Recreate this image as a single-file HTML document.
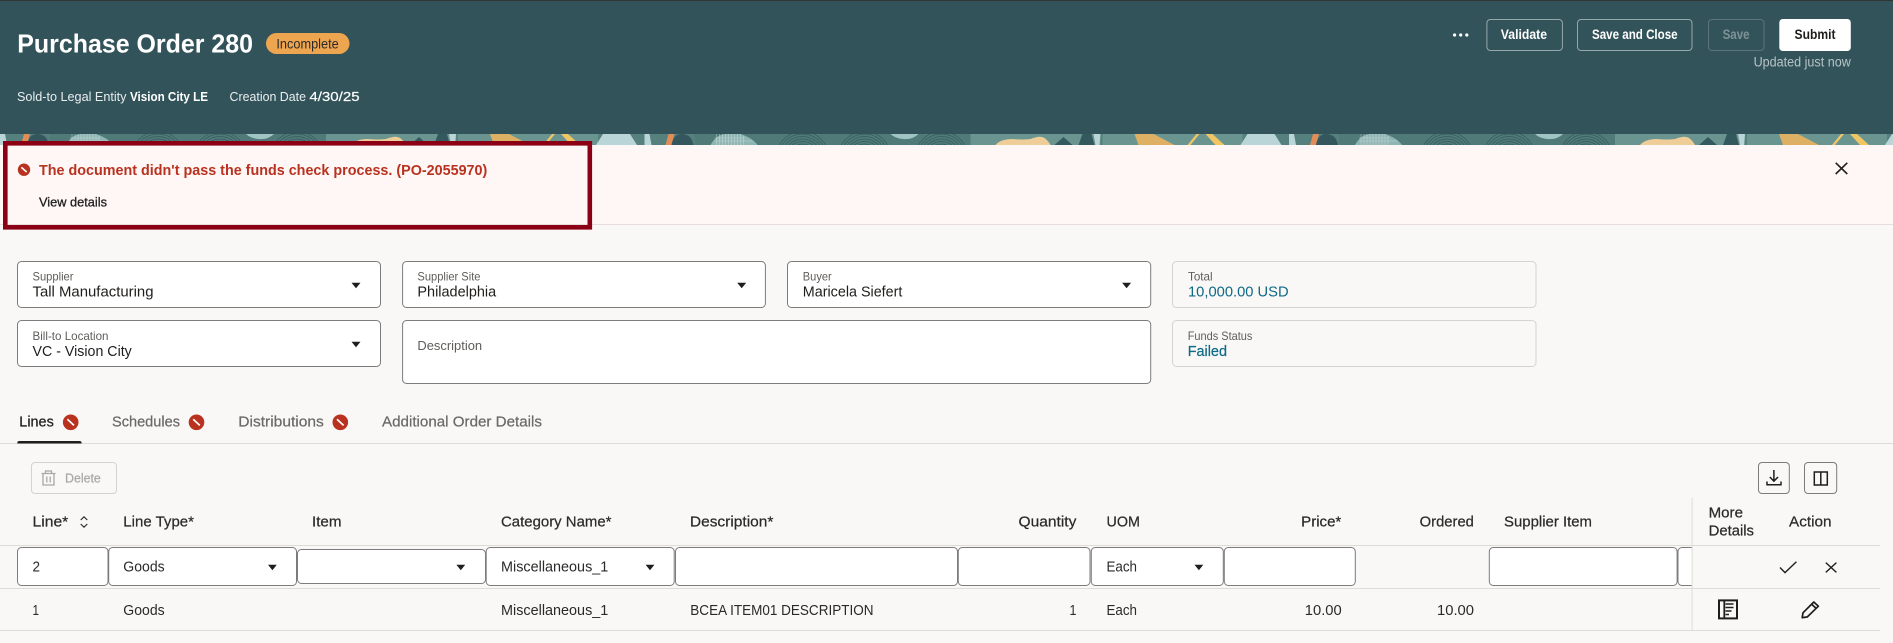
<!DOCTYPE html>
<html lang="en">
<head>
<meta charset="utf-8">
<title>Purchase Order 280</title>
<style>
html,body{margin:0;padding:0;background:#f9f8f6;width:1893px;height:643px;overflow:hidden}
svg{display:block;position:absolute;left:0;top:0}
text{font-family:"Liberation Sans",sans-serif;white-space:pre}
.m{stroke:currentColor;stroke-width:.22}
.lab{font-size:12px;fill:#5f5d5a;color:#5f5d5a}
.val{font-size:15px;fill:#1f1e1c}
.blue{font-size:15px;fill:#0f6a86;color:#0f6a86}
.hd{font-size:14.5px;fill:#2b2a28;color:#2b2a28}
.td{font-size:14.5px;fill:#2b2a28}
.tab{font-size:15px;fill:#6b6966;color:#6b6966}
.input{fill:#fff;stroke:#7d7c7a;stroke-width:1}
.btn{font-size:13.5px;font-weight:bold}
</style>
</head>
<body>
<svg width="1893" height="643" viewBox="0 0 1893 643" xmlns="http://www.w3.org/2000/svg">
<defs>
<pattern id="tile" x="0" y="134" width="644.5" height="11" patternUnits="userSpaceOnUse">
  <rect width="644.5" height="11" fill="#55807d"/>
  <rect x="50" width="280" height="11" fill="#4f7a78"/>
  <polygon points="-1,0 5,0 7,11 -1,11" fill="#b9d5d7"/>
  <polygon points="24,0 30,0 27,11 21,11" fill="#e28d55"/>
  <path d="M27 11 Q29 0 37 0 Q47 0 49 11Z" fill="#33575d"/>
  <path d="M66 11 Q72 0 82 0 L96 0 Q108 4 113 11Z" fill="#8fb5b3"/>
  <g stroke="#dce9e8" stroke-width=".6" fill="none" opacity=".6">
    <path d="M72 11V0M75 11V0M78 11V0M81 11V0M84 11V0M87 11V0M90 11V0M93 11V0M96 11V0M99 11V2"/>
    <path d="M70 4H100M70 7H108"/>
  </g>
  <g fill="none" stroke="#2f5458" stroke-width=".75" opacity=".85">
    <circle cx="158" cy="24" r="14"/><circle cx="158" cy="24" r="16.5"/><circle cx="158" cy="24" r="19"/><circle cx="158" cy="24" r="21.5"/><circle cx="158" cy="24" r="24"/><circle cx="158" cy="24" r="26.5"/>
    <circle cx="220" cy="24" r="14"/><circle cx="220" cy="24" r="16.5"/><circle cx="220" cy="24" r="19"/><circle cx="220" cy="24" r="21.5"/><circle cx="220" cy="24" r="24"/><circle cx="220" cy="24" r="26.5"/>
    <circle cx="297" cy="24" r="14"/><circle cx="297" cy="24" r="16.5"/><circle cx="297" cy="24" r="19"/><circle cx="297" cy="24" r="21.5"/><circle cx="297" cy="24" r="24"/><circle cx="297" cy="24" r="26.5"/>
  </g>
  <path d="M246 0H274Q268 6 258 5 250 4 246 0Z" fill="#a0c4c3"/>
  <rect x="326" width="130" height="11" fill="#6a9490"/>
  <path d="M351 11Q356 5 368 5 378 6 386 5 396 1 400 4 404 7 406 11Z" fill="#eecd98"/>
  <polygon points="410,11 419,3 428,11" fill="#33585e"/>
  <polygon points="434,11 438,0 447,0 450,11" fill="#33585e"/>
  <polygon points="449,0 456,0 455,11 451,11" fill="#b9d5d7"/>
  <rect x="458" width="140" height="11" fill="#6a9490"/>
  <polygon points="490,0 509,0 530,11 494,11" fill="#deb063"/>
  <polygon points="552,0 555,0 546,11 543,11" fill="#f0c664"/>
  <polygon points="561,0 568,0 580,11 571,11" fill="#f0c664"/>
  <polygon points="603,0 630,0 637,11 596,11" fill="#b9d5d7"/>
  <rect x="637" width="8" height="11" fill="#55807d"/>
</pattern>
</defs>

<!-- page -->
<rect width="1893" height="643" fill="#f9f8f6"/>

<!-- header -->
<rect width="1893" height="134" fill="#33535a"/>
<rect width="1893" height="1" fill="#333"/>
<rect y="134" width="1893" height="11" fill="url(#tile)"/>

<text x="17.3" y="52.7" textLength="235.7" lengthAdjust="spacingAndGlyphs" font-size="26" font-weight="bold" fill="#fff">Purchase Order 280</text>
<rect x="266" y="33" width="83.5" height="21" rx="10.5" fill="#eda550"/>
<text x="276.4" y="48.3" textLength="62.3" lengthAdjust="spacingAndGlyphs" font-size="14" fill="#2b2a28">Incomplete</text>

<text x="17" y="101" textLength="109.5" lengthAdjust="spacingAndGlyphs" font-size="13.2" fill="#e8eeee">Sold-to Legal Entity</text>
<text x="130" y="101" textLength="78" lengthAdjust="spacingAndGlyphs" font-size="13.2" font-weight="bold" fill="#fff">Vision City LE</text>
<text x="229.5" y="101" textLength="76.5" lengthAdjust="spacingAndGlyphs" font-size="13.2" fill="#e8eeee">Creation Date</text>
<text x="309.4" y="101" textLength="50.2" lengthAdjust="spacingAndGlyphs" font-size="13.2" fill="#fff" stroke="#fff" stroke-width=".2">4/30/25</text>

<!-- header actions -->
<g fill="#fff"><circle cx="1454.6" cy="35" r="1.6"/><circle cx="1460.7" cy="35" r="1.6"/><circle cx="1466.8" cy="35" r="1.6"/></g>
<rect x="1486.9" y="19.5" width="75.5" height="31" rx="3.5" fill="none" stroke="#95a8ab"/>
<text class="btn" x="1500.8" y="38.9" textLength="46.2" lengthAdjust="spacingAndGlyphs" fill="#fff">Validate</text>
<rect x="1577.5" y="19.5" width="114.5" height="31" rx="3.5" fill="none" stroke="#95a8ab"/>
<text class="btn" x="1592" y="38.9" textLength="85.6" lengthAdjust="spacingAndGlyphs" fill="#fff">Save and Close</text>
<rect x="1708.5" y="19.5" width="55.5" height="31" rx="3.5" fill="none" stroke="#5b7479"/>
<text class="btn" x="1722.6" y="38.9" textLength="27" lengthAdjust="spacingAndGlyphs" fill="#7d9397">Save</text>
<rect x="1779.3" y="19" width="71.5" height="32" rx="3.5" fill="#fff"/>
<text class="btn" x="1794.5" y="38.9" textLength="41" lengthAdjust="spacingAndGlyphs" fill="#1f1e1c">Submit</text>
<text x="1753.6" y="66.7" textLength="97.2" lengthAdjust="spacingAndGlyphs" font-size="13.5" fill="#b5c4c7">Updated just now</text>

<!-- message banner -->
<rect y="145" width="1893" height="79.5" fill="#fef7f5"/>
<rect y="224" width="1893" height="1" fill="#e8dcdc"/>
<circle cx="24" cy="169.7" r="6.2" fill="#b8321f"/>
<path d="M21.4 167.4L26.6 172" stroke="#fff" stroke-width="1.6" fill="none"/>
<text x="39" y="175" textLength="448.3" lengthAdjust="spacingAndGlyphs" font-size="15" font-weight="bold" fill="#b8321f">The document didn't pass the funds check process. (PO-2055970)</text>
<text x="39" y="206.7" textLength="68" lengthAdjust="spacingAndGlyphs" font-size="13" fill="#1f1e1c" stroke="#1f1e1c" stroke-width=".3">View details</text>
<path d="M1835.7 162.8L1847.3 174M1847.3 162.8L1835.7 174" stroke="#1f1e1c" stroke-width="1.6" fill="none"/>
<rect x="5.3" y="143.3" width="584.5" height="84" fill="none" stroke="#8b0015" stroke-width="4.6"/>

<!-- form row 1 -->
<rect class="input" x="17.5" y="261.5" width="363" height="46" rx="4"/>
<text class="lab" x="32.5" y="280.7" textLength="41" lengthAdjust="spacingAndGlyphs">Supplier</text>
<text class="val" x="32.5" y="296.7" textLength="121" lengthAdjust="spacingAndGlyphs">Tall Manufacturing</text>
<polygon points="351.5,282.7 360.5,282.7 356,288.2" fill="#1f1e1c"/>

<rect class="input" x="402.6" y="261.5" width="362.8" height="46" rx="4"/>
<text class="lab" x="417.4" y="280.7" textLength="63.1" lengthAdjust="spacingAndGlyphs">Supplier Site</text>
<text class="val" x="417.4" y="296.7" textLength="78.8" lengthAdjust="spacingAndGlyphs">Philadelphia</text>
<polygon points="737.2,282.7 746.2,282.7 741.7,288.2" fill="#1f1e1c"/>

<rect class="input" x="787.5" y="261.5" width="363.2" height="46" rx="4"/>
<text class="lab" x="802.8" y="280.7" textLength="28.9" lengthAdjust="spacingAndGlyphs">Buyer</text>
<text class="val" x="802.8" y="296.7" textLength="99.6" lengthAdjust="spacingAndGlyphs">Maricela Siefert</text>
<polygon points="1122.1,282.7 1131.1,282.7 1126.6,288.2" fill="#1f1e1c"/>

<rect x="1172.5" y="261.5" width="363.5" height="46" rx="4" fill="#f9f8f6" stroke="#d5d3d0"/>
<text class="lab" x="1188" y="280.7" textLength="24.6" lengthAdjust="spacingAndGlyphs">Total</text>
<text class="blue" x="1188" y="296.7" textLength="100.6" lengthAdjust="spacingAndGlyphs">10,000.00 USD</text>

<!-- form row 2 -->
<rect class="input" x="17.5" y="320.5" width="363" height="46" rx="4"/>
<text class="lab" x="32.5" y="340" textLength="76" lengthAdjust="spacingAndGlyphs">Bill-to Location</text>
<text class="val" x="32.5" y="356" textLength="99.3" lengthAdjust="spacingAndGlyphs">VC - Vision City</text>
<polygon points="351.5,341.7 360.5,341.7 356,347.2" fill="#1f1e1c"/>

<rect class="input" x="402.6" y="320.5" width="748.1" height="63" rx="4"/>
<text class="lab" x="417.4" y="350" textLength="64.7" lengthAdjust="spacingAndGlyphs" style="font-size:12.5px">Description</text>

<rect x="1172.5" y="320.5" width="363.5" height="46" rx="4" fill="#f9f8f6" stroke="#d5d3d0"/>
<text class="lab" x="1187.7" y="340" textLength="64.7" lengthAdjust="spacingAndGlyphs">Funds Status</text>
<text class="blue m" x="1187.7" y="356" textLength="39.3" lengthAdjust="spacingAndGlyphs">Failed</text>

<!-- tabs -->
<rect y="443" width="1893" height="1" fill="#dedcd9"/>
<text class="tab m" x="19.3" y="426.7" textLength="34.5" lengthAdjust="spacingAndGlyphs" style="fill:#1f1e1c;color:#1f1e1c">Lines</text>
<path d="M17.3 443.5V443a2 2 0 0 1 2-2H79.6a2 2 0 0 1 2 2v.5Z" fill="#1f1e1c"/>
<circle cx="70.7" cy="422.3" r="7.8" fill="#b8321f"/><path d="M67.4 419.2L74 425.4" stroke="#fff" stroke-width="1.7"/>
<text class="tab m" x="112" y="426.7" textLength="68" lengthAdjust="spacingAndGlyphs">Schedules</text>
<circle cx="196.5" cy="422.3" r="7.8" fill="#b8321f"/><path d="M193.2 419.2L199.8 425.4" stroke="#fff" stroke-width="1.7"/>
<text class="tab m" x="238.3" y="426.7" textLength="85.5" lengthAdjust="spacingAndGlyphs">Distributions</text>
<circle cx="340.3" cy="422.3" r="7.8" fill="#b8321f"/><path d="M337 419.2L343.6 425.4" stroke="#fff" stroke-width="1.7"/>
<text class="tab m" x="382" y="426.7" textLength="160" lengthAdjust="spacingAndGlyphs">Additional Order Details</text>

<!-- toolbar -->
<rect x="31.5" y="462.5" width="85" height="31" rx="3.5" fill="none" stroke="#d4d2cf"/>
<g fill="none" stroke="#a9a7a4" stroke-width="1.3">
  <path d="M41.5 473.5H55.5M45.5 473.5V471H51.5V473.5M43 473.5V485H54V473.5M46.8 476.5V482.5M50.2 476.5V482.5"/>
</g>
<text class="m" x="65" y="482.7" textLength="35.8" lengthAdjust="spacingAndGlyphs" font-size="13" fill="#a9a7a4" style="color:#a9a7a4">Delete</text>

<rect x="1758.5" y="462.5" width="30.8" height="31" rx="3.5" fill="none" stroke="#7d7c7a"/>
<path d="M1773.9 470V481M1769.8 477L1773.9 481.2 1778 477M1767 481.5V484.7H1781V481.5" fill="none" stroke="#1f1e1c" stroke-width="1.5"/>
<rect x="1804.5" y="462.5" width="32.2" height="31" rx="3.5" fill="none" stroke="#7d7c7a"/>
<path d="M1814.3 472H1827.3V485H1814.3ZM1820.8 472V485" fill="none" stroke="#1f1e1c" stroke-width="1.5"/>

<!-- table headers -->
<text class="hd m" x="32.5" y="526.7" textLength="35.8" lengthAdjust="spacingAndGlyphs">Line*</text>
<path d="M80.7 520L84 516.8 87.3 520M80.7 524L84 527.2 87.3 524" fill="none" stroke="#2b2a28" stroke-width="1.1"/>
<text class="hd m" x="123.3" y="526.7" textLength="70.7" lengthAdjust="spacingAndGlyphs">Line Type*</text>
<text class="hd m" x="312" y="526.7" textLength="29.5" lengthAdjust="spacingAndGlyphs">Item</text>
<text class="hd m" x="501" y="526.7" textLength="110.5" lengthAdjust="spacingAndGlyphs">Category Name*</text>
<text class="hd m" x="689.9" y="526.7" textLength="83.5" lengthAdjust="spacingAndGlyphs">Description*</text>
<text class="hd m" x="1018.5" y="526.7" textLength="57.9" lengthAdjust="spacingAndGlyphs">Quantity</text>
<text class="hd m" x="1106.5" y="526.7" textLength="33.4" lengthAdjust="spacingAndGlyphs">UOM</text>
<text class="hd m" x="1301.2" y="526.7" textLength="40.1" lengthAdjust="spacingAndGlyphs">Price*</text>
<text class="hd m" x="1419.7" y="526.7" textLength="54.2" lengthAdjust="spacingAndGlyphs">Ordered</text>
<text class="hd m" x="1504" y="526.7" textLength="88" lengthAdjust="spacingAndGlyphs">Supplier Item</text>
<text class="hd m" x="1708.6" y="517.7" textLength="34.4" lengthAdjust="spacingAndGlyphs">More</text>
<text class="hd m" x="1708.6" y="535.7" textLength="45.4" lengthAdjust="spacingAndGlyphs">Details</text>
<text class="hd m" x="1789" y="526.7" textLength="42.5" lengthAdjust="spacingAndGlyphs">Action</text>

<!-- table lines -->
<rect y="545" width="1880" height="1" fill="#dedcd9"/>
<rect y="588" width="1880" height="1" fill="#dedcd9"/>
<rect y="630" width="1880" height="1" fill="#dedcd9"/>

<!-- edit row -->
<rect class="input" x="17.5" y="547.5" width="90.5" height="38" rx="4"/>
<text class="td" x="32.5" y="571.7" textLength="7.5" lengthAdjust="spacingAndGlyphs">2</text>
<rect class="input" x="108.7" y="547.5" width="187.8" height="38" rx="4"/>
<text class="td" x="123.3" y="571.7" textLength="41.4" lengthAdjust="spacingAndGlyphs">Goods</text>
<polygon points="268,564.8 276.8,564.8 272.4,570.2" fill="#1f1e1c"/>
<rect class="input" x="297.5" y="549.5" width="188" height="34" rx="4"/>
<polygon points="456.4,564.8 465.2,564.8 460.8,570.2" fill="#1f1e1c"/>
<rect class="input" x="486.2" y="547.5" width="188" height="38" rx="4"/>
<text class="td" x="501" y="571.7" textLength="107.3" lengthAdjust="spacingAndGlyphs">Miscellaneous_1</text>
<polygon points="645.6,564.8 654.4,564.8 650,570.2" fill="#1f1e1c"/>
<rect class="input" x="675.5" y="547.5" width="282" height="38" rx="4"/>
<rect class="input" x="958.3" y="547.5" width="131.7" height="38" rx="4"/>
<rect class="input" x="1091.3" y="547.5" width="132" height="38" rx="4"/>
<text class="td" x="1106.5" y="571.7" textLength="30.5" lengthAdjust="spacingAndGlyphs">Each</text>
<polygon points="1194.5,564.8 1203.3,564.8 1198.9,570.2" fill="#1f1e1c"/>
<rect class="input" x="1224.3" y="547.5" width="131" height="38" rx="4"/>
<rect class="input" x="1489.3" y="547.5" width="187.8" height="38" rx="4"/>
<path d="M1692 547.5H1682a4 4 0 0 0-4 4V581.5a4 4 0 0 0 4 4H1692V547.5Z" fill="#fff"/>
<path d="M1692 547.5H1682a4 4 0 0 0-4 4V581.5a4 4 0 0 0 4 4H1692" fill="none" stroke="#7d7c7a"/>

<!-- data row -->
<text class="td" x="32.5" y="615" textLength="6.5" lengthAdjust="spacingAndGlyphs">1</text>
<text class="td" x="123.3" y="615" textLength="41.4" lengthAdjust="spacingAndGlyphs">Goods</text>
<text class="td" x="501" y="615" textLength="107.3" lengthAdjust="spacingAndGlyphs">Miscellaneous_1</text>
<text class="td" x="690.3" y="615" textLength="183.2" lengthAdjust="spacingAndGlyphs">BCEA ITEM01 DESCRIPTION</text>
<text class="td" x="1069.5" y="615" textLength="6.9" lengthAdjust="spacingAndGlyphs">1</text>
<text class="td" x="1106.5" y="615" textLength="30.5" lengthAdjust="spacingAndGlyphs">Each</text>
<text class="td" x="1304.8" y="615" textLength="36.9" lengthAdjust="spacingAndGlyphs">10.00</text>
<text class="td" x="1437" y="615" textLength="37" lengthAdjust="spacingAndGlyphs">10.00</text>

<!-- sticky column -->
<rect x="1691.6" y="497.7" width="1" height="133" fill="#dedcd9"/>
<path d="M1780 567.5L1785 572.6 1796.4 561.8" fill="none" stroke="#1f1e1c" stroke-width="1.4"/>
<path d="M1825.8 562.6L1836.4 572.4M1836.4 562.6L1825.8 572.4" fill="none" stroke="#1f1e1c" stroke-width="1.4"/>
<g fill="none" stroke="#1f1e1c">
  <rect x="1719" y="600.4" width="18" height="18" stroke-width="2"/>
  <path d="M1724.3 600V619" stroke-width="1.8"/>
  <path d="M1725.5 604H1733.5M1725.5 607.5H1733.5M1725.5 611H1731.5M1725.5 614.5H1729" stroke-width="1.5"/>
</g>
<path d="M1802.2 617.6L1803 612.8 1813.8 602 1818.4 606.2 1807.2 617ZM1811.6 604.2L1816.2 608.4" fill="none" stroke="#1f1e1c" stroke-width="1.7" stroke-linejoin="round"/>
</svg>
</body>
</html>
